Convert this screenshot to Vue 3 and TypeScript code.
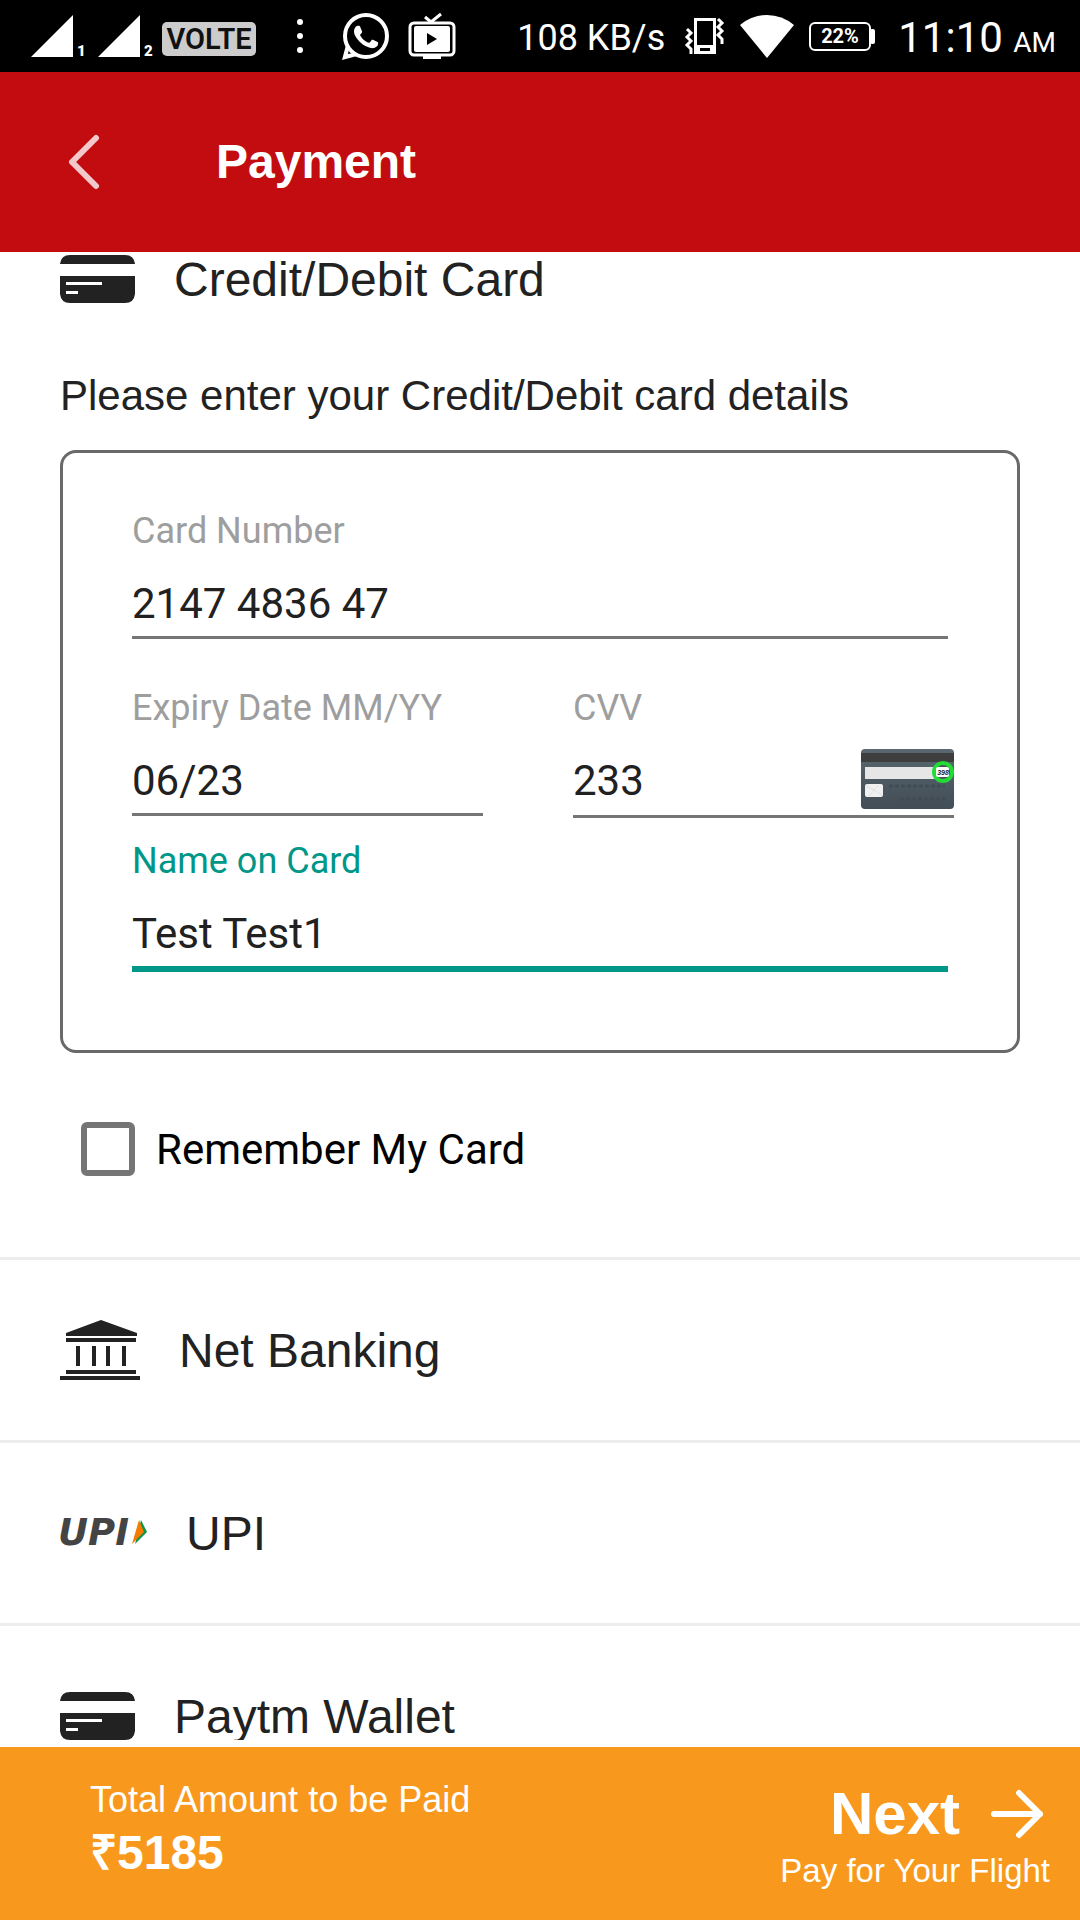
<script setup lang="ts">
import { reactive, ref } from 'vue'

interface PaymentMethod {
  id: string
  label: string
  icon: 'bank' | 'upi' | 'card'
}

const card = reactive({
  number: '2147 4836 47',
  expiry: '06/23',
  cvv: '233',
  name: 'Test Test1',
})
const remember = ref(false)
const selected = ref('card')
const total = 5185

const methods: PaymentMethod[] = [
  { id: 'netbanking', label: 'Net Banking', icon: 'bank' },
  { id: 'upi', label: 'UPI', icon: 'upi' },
  { id: 'paytm', label: 'Paytm Wallet', icon: 'card' },
]
</script>

<template>
  <div class="screen">
    <div class="status">
      <div class="status-group">
        <svg class="signal" width="60" height="52" viewBox="0 0 60 52" aria-hidden="true">
          <path d="M0 47L42 5V47Z" fill="#fff" />
          <text class="sim" x="46" y="46">1</text>
        </svg>
        <svg class="second" width="60" height="52" viewBox="0 0 60 52" aria-hidden="true">
          <path d="M0 47L42 5V47Z" fill="#fff" />
          <text class="sim" x="46" y="46">2</text>
        </svg>
        <span class="volte">VOLTE</span>
        <svg class="dots" width="8" height="36" viewBox="0 0 8 36" fill="#fff" aria-hidden="true">
          <circle cx="4" cy="4" r="3" /><circle cx="4" cy="18" r="3" /><circle cx="4" cy="32" r="3" />
        </svg>
        <svg class="whatsapp" width="48" height="48" viewBox="0 0 48 48" aria-hidden="true">
          <circle cx="24" cy="24" r="21" fill="none" stroke="#fff" stroke-width="4" />
          <path d="M4 33L0 48L15 44L11 41L6 42L7 37Z" fill="#fff" />
          <path
            transform="translate(0 1) scale(2)"
            fill="#fff"
            d="M17.472 14.382c-.297-.149-1.758-.867-2.03-.967-.273-.099-.471-.148-.67.15-.197.297-.767.966-.94 1.164-.173.199-.347.223-.644.075-.297-.15-1.255-.463-2.39-1.475-.883-.788-1.48-1.761-1.653-2.059-.173-.297-.018-.458.13-.606.134-.133.298-.347.446-.52.149-.174.198-.298.298-.497.099-.198.05-.371-.025-.52-.075-.149-.669-1.612-.916-2.207-.242-.579-.487-.5-.669-.51-.173-.008-.371-.01-.57-.01-.198 0-.52.074-.792.372-.272.297-1.04 1.016-1.04 2.479 0 1.462 1.065 2.875 1.213 3.074.149.198 2.096 3.2 5.077 4.487.709.306 1.262.489 1.694.625.712.227 1.36.195 1.871.118.571-.085 1.758-.719 2.006-1.413.248-.694.248-1.289.173-1.413-.074-.124-.272-.198-.57-.347"
          />
        </svg>
        <svg class="tv" width="46" height="48" viewBox="0 0 46 48" aria-hidden="true">
          <path d="M16 5L22 10L32 2" fill="none" stroke="#fff" stroke-width="3" />
          <rect x="1" y="11" width="44" height="32" rx="4" fill="none" stroke="#fff" stroke-width="3" />
          <rect x="5" y="14" width="36" height="26" rx="2" fill="#fff" />
          <path d="M18 21V33L28 27Z" fill="#000" />
          <rect x="14" y="43" width="18" height="4" fill="#fff" />
        </svg>
      </div>

      <div class="status-group">
        <span class="speed">108 KB/s</span>
        <svg class="vibrate" width="41" height="38" viewBox="0 0 41 38" aria-hidden="true">
          <path fill-rule="evenodd" d="M8 1H30V37H8ZM11 4V28H27V4ZM14 31V34H24V31Z" fill="#fff" />
          <path
            d="M1 12L5 16L1 20L5 24L1 28L5 32L5 37M32 2L36 6L32 10L36 14L32 18L36 22L36 27"
            fill="none"
            stroke="#fff"
            stroke-width="3"
          />
        </svg>
        <svg class="wifi" width="54" height="44" viewBox="0 0 54 44" aria-hidden="true">
          <path d="M0 11Q12 1 27 1T54 11L27 44Z" fill="#fff" />
        </svg>
        <svg class="battery" width="67" height="30" viewBox="0 0 67 30" aria-hidden="true">
          <rect x="1" y="2" width="60" height="27" rx="5" fill="none" stroke="#fff" stroke-width="2" />
          <rect x="61" y="8" width="5" height="15" rx="2" fill="#fff" />
          <text class="level" x="31" y="22" text-anchor="middle">22%</text>
        </svg>
        <span class="clock">11:10 <small>AM</small></span>
      </div>
    </div>

    <header class="bar">
      <button class="back" type="button" aria-label="Back">
        <svg width="36" height="60" viewBox="0 0 36 60" aria-hidden="true">
          <path d="M30 6L6 30L30 54" fill="none" stroke="#f3c9cc" stroke-width="6" stroke-linecap="round" stroke-linejoin="round" />
        </svg>
      </button>
      <h1>Payment</h1>
    </header>

    <main class="content">
      <button class="method open" type="button" @click="selected = 'card'">
        <svg width="75" height="48" viewBox="0 0 75 48" fill="#222" aria-hidden="true">
          <path d="M0 9Q1 0 10 0H65Q74 0 75 9Z" />
          <path fill-rule="evenodd" d="M0 21H75V39Q74 48 65 48H10Q1 48 0 39ZM6 27V30H42V27ZM6 36V39H18V36Z" />
        </svg>
        <span>Credit/Debit Card</span>
      </button>

      <section class="details">
        <h2>Please enter your Credit/Debit card details</h2>
        <form class="card-form" @submit.prevent>
          <div class="field">
            <label for="number">Card Number</label>
            <input id="number" v-model="card.number" type="text" inputmode="numeric" />
          </div>
          <div class="pair">
            <div class="field">
              <label for="expiry">Expiry Date MM/YY</label>
              <input id="expiry" v-model="card.expiry" type="text" />
            </div>
            <div class="field cvv">
              <label for="cvv">CVV</label>
              <input id="cvv" v-model="card.cvv" type="text" inputmode="numeric" />
              <svg class="cvv-card" width="93" height="60" viewBox="0 0 93 60" aria-hidden="true">
                <defs>
                  <linearGradient id="plastic" x1="0" y1="0" x2="0" y2="1">
                    <stop offset="0" stop-color="#5a6870" />
                    <stop offset="1" stop-color="#424d56" />
                  </linearGradient>
                </defs>
                <rect width="93" height="60" rx="4" fill="url(#plastic)" />
                <rect y="4" width="93" height="9" fill="#3e3e3e" />
                <rect x="4" y="18" width="74" height="12" fill="#e6e6e6" />
                <rect x="4" y="35" width="18" height="13" rx="2" fill="#f0f0f0" />
                <path d="M13 41L5 37M13 41L21 46M13 41L18 36M13 41L8 47" stroke="#e0e0e0" />
                <path d="M28 37H84M39 50H87" stroke="#414c55" stroke-width="3" stroke-dasharray="4 2" />
                <circle cx="82" cy="23" r="9" fill="#46525b" stroke="#20dc35" stroke-width="4" />
                <rect x="75" y="18" width="13" height="10" rx="2" fill="#fff" />
                <text class="code" x="82" y="26" text-anchor="middle">398</text>
              </svg>
            </div>
          </div>
          <div class="field active">
            <label for="name">Name on Card</label>
            <input id="name" v-model="card.name" type="text" />
          </div>
        </form>
        <label class="remember">
          <input v-model="remember" type="checkbox" />
          <span>Remember My Card</span>
        </label>
      </section>

      <button v-for="m in methods" :key="m.id" class="method" type="button" @click="selected = m.id">
        <svg v-if="m.icon === 'bank'" width="80" height="60" viewBox="0 0 80 60" fill="#222" aria-hidden="true">
          <path d="M6 13L41 0L77 13V16H6ZM6 18H76V22H6ZM16 26H20V46H16ZM32 26H36V46H32ZM46 26H50V46H46ZM62 26H66V46H62ZM6 50H76V54H6ZM0 56H80V60H0Z" />
        </svg>
        <svg v-else-if="m.icon === 'upi'" width="87" height="48" viewBox="0 0 87 48" aria-hidden="true">
          <text class="upi-mark" x="-2" y="36">UPI</text>
          <path d="M81 11L87 23L75 35Z" fill="#0a9447" />
          <path d="M79 11L84 23L72 35Z" fill="#f57a00" />
        </svg>
        <svg v-else width="75" height="48" viewBox="0 0 75 48" fill="#222" aria-hidden="true">
          <path d="M0 9Q1 0 10 0H65Q74 0 75 9Z" />
          <path fill-rule="evenodd" d="M0 21H75V39Q74 48 65 48H10Q1 48 0 39ZM6 27V30H42V27ZM6 36V39H18V36Z" />
        </svg>
        <span>{{ m.label }}</span>
      </button>
    </main>

    <footer class="summary">
      <div class="total">
        <span class="total-label">Total Amount to be Paid</span>
        <strong>₹{{ total }}</strong>
      </div>
      <button class="next" type="button">
        <span class="next-line">
          <strong>Next</strong>
          <svg width="54" height="50" viewBox="0 0 54 50" aria-hidden="true">
            <path d="M4 25H50M29 4L50 25L29 46" fill="none" stroke="#fff" stroke-width="6" stroke-linecap="round" stroke-linejoin="round" />
          </svg>
        </span>
        <span class="next-hint">Pay for Your Flight</span>
      </button>
    </footer>
  </div>
</template>

<style>
body {
  margin: 0;
  background: #fff;
}
</style>

<style scoped>
.screen {
  display: flex;
  flex-direction: column;
  height: 100vh;
  font-family: 'Liberation Sans', Arial, sans-serif;
  color: #222;
}
button {
  padding: 0;
  border: 0;
  background: none;
  font-family: inherit;
  color: inherit;
  cursor: pointer;
}
svg {
  display: block;
  flex: none;
  overflow: visible;
}
h1,
h2 {
  margin: 0;
}

/* status bar */
.status {
  flex: none;
  display: flex;
  align-items: center;
  justify-content: space-between;
  height: 72px;
  padding: 0 24px 0 31px;
  background: #000;
  color: #fff;
  font-family: Roboto, sans-serif;
}
.status-group {
  display: flex;
  align-items: center;
}
.second {
  margin-left: 7px;
}
.sim {
  font: 900 15px Roboto, sans-serif;
  fill: #fff;
}
.volte {
  margin: 6px 0 0 4px;
  width: 94px;
  border-radius: 5px;
  background: #ccc;
  color: #111;
  font-size: 29px;
  font-weight: 600;
  line-height: 34px;
  text-align: center;
}
.dots {
  margin-left: 40px;
}
.whatsapp {
  margin-left: 38px;
}
.tv {
  margin-left: 19px;
}
.speed,
.clock {
  white-space: nowrap;
}
.speed {
  margin-top: 3px;
  font-size: 36px;
}
.vibrate {
  margin-left: 21px;
}
.wifi {
  margin-left: 13px;
}
.battery {
  margin-left: 15px;
}
.level {
  font: 700 20px Roboto, sans-serif;
  fill: #fff;
}
.clock {
  margin: 3px 0 0 22px;
  font-size: 42px;
}
.clock small {
  font-size: 28px;
}

/* title bar */
.bar {
  flex: none;
  display: flex;
  align-items: center;
  gap: 114px;
  height: 180px;
  padding: 0 66px;
  background: #c30c10;
  color: #fff;
}
.bar h1 {
  font-size: 48px;
  line-height: 62px;
}

/* payment methods */
.content {
  flex: 1;
  min-height: 0;
  overflow-y: auto;
  scrollbar-width: none;
}
.method {
  display: flex;
  align-items: center;
  gap: 39px;
  width: 100%;
  height: 183px;
  padding: 0 60px;
  border-top: 3px solid #ededed;
  font-size: 48px;
  text-align: left;
}
.method.open {
  height: 54px;
  border-top: 0;
}
.upi-mark {
  font: italic 700 37px 'DejaVu Sans', sans-serif;
  fill: #444;
}
.details {
  padding: 63px 60px 78px;
}
.details h2 {
  font-size: 42px;
  font-weight: 400;
  line-height: 54px;
}
.card-form {
  margin-top: 27px;
  padding: 54px 69px 78px;
  border: 3px solid #696969;
  border-radius: 16px;
  font-family: Roboto, sans-serif;
}
.pair {
  display: grid;
  grid-template-columns: 351fr 381fr;
  column-gap: 90px;
  margin: 45px -6px 19px 0;
}
.field {
  position: relative;
  display: flex;
  flex-direction: column;
  align-items: stretch;
  min-width: 0;
}
.field label {
  margin-bottom: 20px;
  color: #9e9e9e;
  font-size: 36px;
  line-height: 48px;
}
.field input {
  box-sizing: content-box;
  min-width: 0;
  height: 56px;
  padding: 0 0 5px;
  border: 0;
  border-bottom: 3px solid #757575;
  border-radius: 0;
  outline: 0;
  background: none;
  color: #212121;
  font: 42px Roboto, sans-serif;
}
.pair .field {
  align-self: start;
}
.field.cvv input {
  padding: 0 105px 7px 0;
}
.cvv-card {
  position: absolute;
  right: 0;
  bottom: 9px;
}
.code {
  font: italic 700 7px 'Liberation Sans', sans-serif;
  fill: #222;
}
.active label {
  color: #009688;
}
.active input {
  border-bottom: 6px solid #009688;
}
.remember {
  display: flex;
  align-items: center;
  gap: 21px;
  width: fit-content;
  margin: 66px 0 0 21px;
  height: 60px;
  color: #000;
  font: 42px Roboto, sans-serif;
}
.remember input {
  appearance: none;
  width: 54px;
  height: 54px;
  margin: 0;
  border: 6px solid #757575;
  border-radius: 6px;
  background: #fff;
}
.remember input:checked {
  background: #009688;
}

/* footer */
.summary {
  flex: none;
  display: flex;
  align-items: flex-start;
  justify-content: space-between;
  margin-top: 7px;
  min-height: 173px;
  box-sizing: border-box;
  padding: 30px 30px 24px 90px;
  background: #f8991d;
  color: #fff;
}
.total {
  display: flex;
  flex-direction: column;
}
.total-label {
  font-size: 36px;
  line-height: 46px;
}
.total strong {
  font-size: 48px;
  line-height: 60px;
}
.next {
  display: flex;
  flex-direction: column;
  align-items: flex-end;
}
.next-line {
  display: flex;
  align-items: center;
  gap: 30px;
  padding-right: 6px;
}
.next-line strong {
  font-size: 60px;
  line-height: 74px;
}
.next-hint {
  font-size: 33px;
  line-height: 40px;
}
</style>
